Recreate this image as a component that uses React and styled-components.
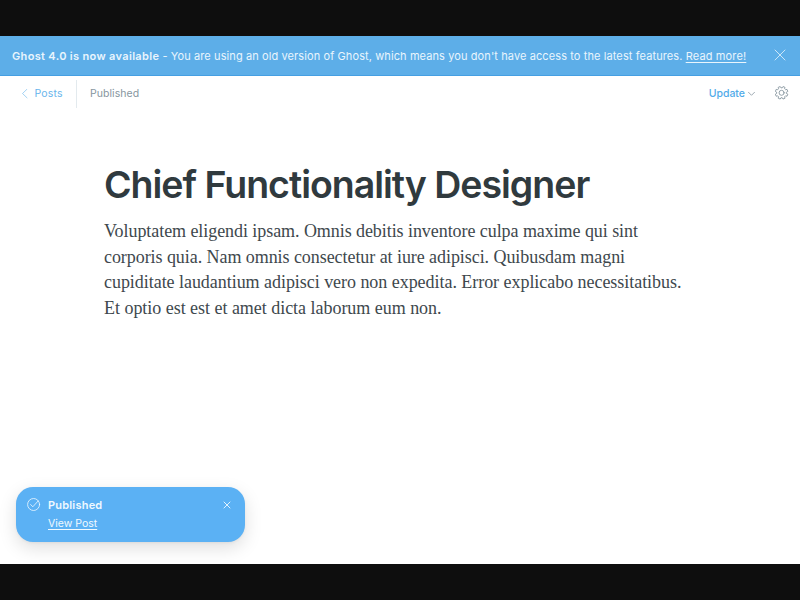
import React from 'react';
import styled, { createGlobalStyle } from 'styled-components';

const GlobalStyle = createGlobalStyle`
  * { box-sizing: border-box; }
  body { margin: 0; background: #0e0e0e; font-family: Inter, "Liberation Sans", sans-serif; }
`;

const Screen = styled.div`
  width: 800px;
  height: 600px;
  padding: 36px 0;
  background: #0e0e0e;
  overflow: hidden;
`;

const Window = styled.div`
  position: relative;
  height: 528px;
  background: #fff;
  overflow: hidden;
`;

const Banner = styled.div`
  display: flex;
  align-items: center;
  height: 40px;
  padding: 0 14px 0 12px;
  background: #5daee8;
  border-bottom: 1px solid #459fe2;
  color: #e9f5fd;
`;

const Text = styled.span`
  padding-top: ${p => p.$drop || 0}px;
  font-size: ${p => p.$size || 10.5}px;
  font-weight: ${p => p.$weight || 400};
  letter-spacing: ${p => p.$spacing || 0}px;
  color: ${p => p.$color || 'inherit'};
  line-height: 16px;
  white-space: pre;
`;

const TextLink = styled.a`
  color: inherit;
  text-decoration: underline;
  text-underline-offset: 1.5px;
  text-decoration-thickness: 1px;
`;

const IconButton = styled.button`
  display: flex;
  padding: 0;
  border: 0;
  background: none;
  color: ${p => p.$color || 'inherit'};
  margin: ${p => p.$margin || '0 0 0 auto'};
`;

const Icon = styled.svg`
  display: block;
  fill: none;
  stroke: currentColor;
  stroke-linecap: round;
  stroke-linejoin: round;
`;

const Toolbar = styled.header`
  display: flex;
  align-items: center;
  height: 34px;
  padding: 0 11px 0 21px;
`;

const BackLink = styled.a`
  display: flex;
  align-items: center;
  gap: 6.5px;
  width: 56px;
  height: 28px;
  margin-top: 1px;
  border-right: 1px solid #e3eaee;
  color: #68b5ec;
`;

const Status = styled.div`
  display: flex;
  margin-left: 13px;
`;

const Update = styled.div`
  display: flex;
  align-items: center;
  gap: 3px;
  margin-left: auto;
`;

const Editor = styled.main`
  padding: 52px 104px 0;
`;

const Title = styled.h1`
  margin: 0;
  font-size: 37.5px;
  font-weight: 600;
  line-height: 46px;
  letter-spacing: -1.02px;
  color: #303a3e;
  white-space: nowrap;
`;

const Paragraph = styled.p`
  margin: 11px 0 0;
  font-family: "Liberation Serif", serif;
  font-size: 18px;
  line-height: 25.6px;
  color: #3e484d;
`;

const Line = styled.span`
  display: block;
  white-space: nowrap;
  letter-spacing: ${p => p.$spacing}px;
`;

const Toast = styled.aside`
  position: absolute;
  left: 16px;
  top: 451px;
  display: flex;
  align-items: flex-start;
  width: 229px;
  height: 55px;
  padding: 10px 14px 0 11px;
  border-radius: 17px;
  background: #5bb1f4;
  color: #f0f9ff;
  box-shadow: 0 6px 18px rgba(0, 0, 0, 0.13), 0 1px 3px rgba(0, 0, 0, 0.05);
`;

const ToastBody = styled.div`
  display: flex;
  flex-direction: column;
  gap: 3px;
  margin-left: 7px;
`;

const gear = Array.from({ length: 8 }, (_, i) =>
  [[-15, 5], [-10, 6.4], [10, 6.4], [15, 5]].map(([d, r]) => {
    const a = ((i * 45 + 22.5 + d) * Math.PI) / 180;
    return `${(7 + r * Math.cos(a)).toFixed(2)} ${(7 + r * Math.sin(a)).toFixed(2)}`;
  })
).flat().join(' L');

const LINES = [
  ['Voluptatem eligendi ipsam. Omnis debitis inventore culpa maxime qui sint', -0.065],
  ['corporis quia. Nam omnis consectetur at iure adipisci. Quibusdam magni', -0.062],
  ['cupiditate laudantium adipisci vero non expedita. Error explicabo necessitatibus.', -0.042],
  ['Et optio est est et amet dicta laborum eum non.', -0.03],
];

export default function App() {
  return (
    <Screen>
      <GlobalStyle />
      <Window>
        <Banner>
          <Text $drop={1} $size={11} $weight={600} $spacing={0.33}>Ghost 4.0 is now available</Text>
          <Text $drop={1} $size={11} $spacing={0.1}> - You are using an old version of Ghost, which means you don't have access to the latest features. </Text>
          <Text $drop={1} $size={11} $spacing={0.14}><TextLink>Read more!</TextLink></Text>
          <IconButton aria-label="Close banner" $margin="0 0 1px auto">
            <Icon width="12" height="12" viewBox="0 0 12 12" strokeWidth="0.8"><path d="M1 1 11 11M11 1 1 11" /></Icon>
          </IconButton>
        </Banner>
        <Toolbar>
          <BackLink>
            <Icon width="7" height="10" viewBox="0 1 7 10" strokeWidth="0.6"><path d="M6 1.2 1.5 5.5 6 9.8" /></Icon>
            <Text $spacing={0.15}>Posts</Text>
          </BackLink>
          <Status><Text $drop={2} $spacing={0.05} $color="#8796a0">Published</Text></Status>
          <Update>
            <Text $drop={2} $color="#51abe9" $weight={500}>Update</Text>
            <Icon width="7" height="5" viewBox="0 0 7 5" strokeWidth="0.8" color="#8796a0"><path d="M.5 1.3 3.5 4.3 6.5 1.3" /></Icon>
          </Update>
          <IconButton aria-label="Settings" $color="#7b8b95" $margin="0 0 0 20px">
            <Icon width="14" height="14" viewBox="0.4 0.2 14 14" strokeWidth="0.8"><path d={`M${gear} Z`} /><circle cx="7" cy="7" r="2.5" /></Icon>
          </IconButton>
        </Toolbar>
        <Editor>
          <Title>Chief Functionality Designer</Title>
          <Paragraph>
            {LINES.map(([text, spacing]) => <Line key={text} $spacing={spacing}>{text}</Line>)}
          </Paragraph>
        </Editor>
        <Toast>
          <Icon width="14" height="14" viewBox="0.4 -0.5 14 14" strokeWidth="0.8"><circle cx="7" cy="7" r="6" /><path d="M4 7 6.2 9.3 11.6 3.4" /></Icon>
          <ToastBody>
            <Text $size={11} $weight={600} $spacing={0.2}>Published</Text>
            <Text><TextLink>View Post</TextLink></Text>
          </ToastBody>
          <IconButton aria-label="Dismiss" $margin="4px 0 0 auto">
            <Icon width="8" height="8" viewBox="0 0 8 8" strokeWidth="0.9"><path d="M1 1 7 7M7 1 1 7" /></Icon>
          </IconButton>
        </Toast>
      </Window>
    </Screen>
  );
}
